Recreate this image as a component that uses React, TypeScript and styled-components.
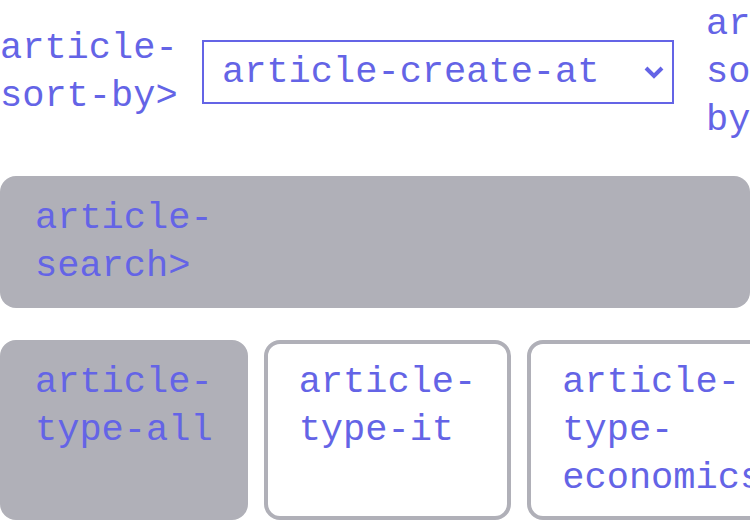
import React from "react";
import styled, { createGlobalStyle } from "styled-components";

const Global = createGlobalStyle`
  * { box-sizing: border-box; }
  body { margin: 0; background: #fff; overflow: hidden; }
  body, button, select {
    font-family: "Liberation Mono", monospace;
    font-size: 37px;
    line-height: 48px;
    color: #6464e6;
  }
`;

const Page = styled.main`
  display: flex;
  flex-direction: column;
  gap: 32px;
`;
const SortBar = styled.section`
  display: flex;
  align-items: center;
`;
const SortLabel = styled.label`
  flex: 0 0 202px;
`;
const Field = styled.div`
  flex: 0 0 472px;
  display: grid;
  align-items: center;
  margin-right: 32px;
`;
const Select = styled.select`
  grid-area: 1 / 1;
  appearance: none;
  width: 100%;
  height: 64px;
  padding: 0 18px;
  border: 2px solid #6464e6;
  border-radius: 0;
  background: #fff;
`;
const Chevron = styled.svg`
  grid-area: 1 / 1;
  justify-self: end;
  margin-right: 8px;
  width: 24px;
  height: 24px;
  pointer-events: none;
`;
const Search = styled.button`
  display: block;
  width: 100%;
  padding: 18px 35px;
  border: 0;
  border-radius: 16px;
  background: #b0b0b8;
  text-align: left;
`;
const Types = styled.nav`
  display: flex;
  gap: 16px;
`;
const Type = styled.button<{ $active?: boolean }>`
  flex: none;
  display: flex;
  padding: 14px 31px;
  border: 4px solid #b0b0b8;
  border-radius: 16px;
  background: ${(p) => (p.$active ? "#b0b0b8" : "#fff")};
  text-align: left;
  white-space: nowrap;
`;

export default function App() {
  return (
    <Page>
      <Global />
      <SortBar>
        <SortLabel htmlFor="sort">article-<br />sort-by&gt;</SortLabel>
        <Field>
          <Select id="sort"><option>article-create-at</option></Select>
          <Chevron viewBox="0 0 24 24" fill="none" stroke="#6464e6" strokeWidth="4"><path d="M4 8l8 8 8-8" /></Chevron>
        </Field>
        <SortLabel as="span">article-<br />sort-<br />by&gt;</SortLabel>
      </SortBar>
      <Search><span>article-<br />search&gt;</span></Search>
      <Types>
        <Type $active><span>article-<br />type-all</span></Type>
        <Type><span>article-<br />type-it</span></Type>
        <Type><span>article-<br />type-<br />economics</span></Type>
      </Types>
    </Page>
  );
}
